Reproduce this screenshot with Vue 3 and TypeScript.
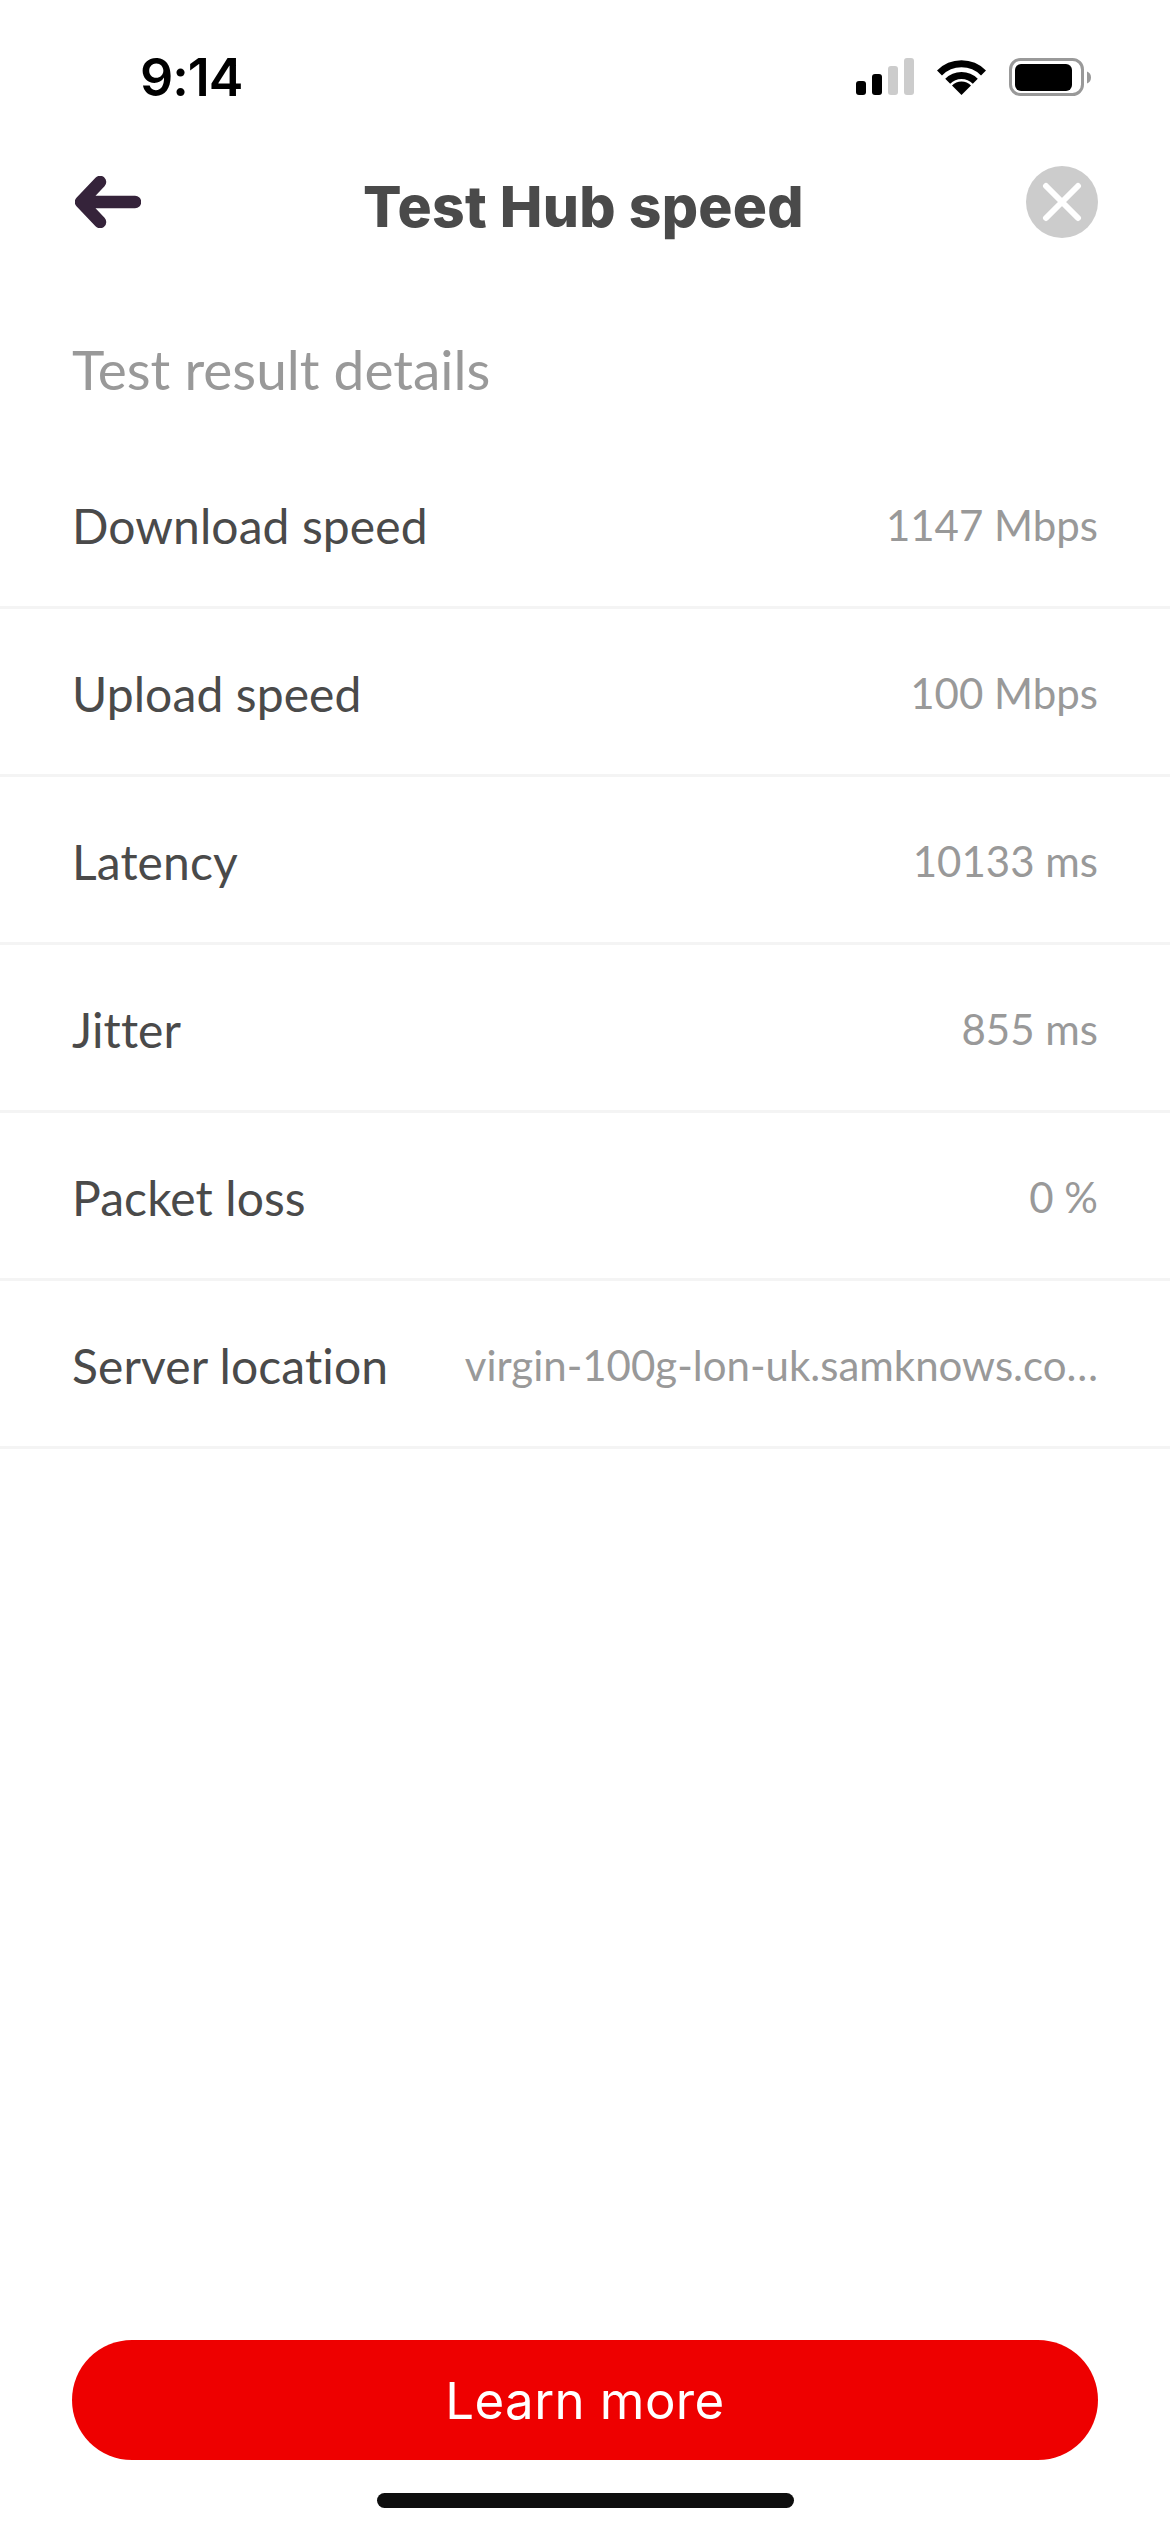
<script setup lang="ts">
interface Row {
  label: string;
  value: string;
}
const rows: Row[] = [
  { label: 'Download speed', value: '1147 Mbps' },
  { label: 'Upload speed', value: '100 Mbps' },
  { label: 'Latency', value: '10133 ms' },
  { label: 'Jitter', value: '855 ms' },
  { label: 'Packet loss', value: '0 %' },
  { label: 'Server location', value: 'virgin-100g-lon-uk.samknows.co…' },
];
</script>

<template>
  <div class="page">
    <div class="status">
      <span class="time">9:14</span>
      <div class="status-icons">
        <svg width="58" height="37" viewBox="0 0 58 37">
          <rect x="0" y="23" width="10" height="14" rx="3" fill="#000" />
          <rect x="16" y="16" width="10" height="21" rx="3" fill="#000" />
          <rect x="32" y="8" width="10" height="29" rx="3" fill="#ccc" />
          <rect x="48" y="0" width="10" height="37" rx="3" fill="#ccc" />
        </svg>
        <svg width="51" height="37" viewBox="0 0 51 37">
          <path d="M3.5 15 A31 31 0 0 1 47.5 15" fill="none" stroke="#000" stroke-width="7" />
          <path d="M11.7 23.2 A19.5 19.5 0 0 1 39.3 23.2" fill="none" stroke="#000" stroke-width="7" />
          <path d="M25.5 37 L16 27.5 A13.4 13.4 0 0 1 35 27.5 Z" fill="#000" />
        </svg>
        <svg width="82" height="38" viewBox="0 0 82 38">
          <rect x="1.5" y="1.5" width="72" height="35" rx="10" fill="none" stroke="#999" stroke-width="3" />
          <rect x="6" y="6" width="57" height="27" rx="6" fill="#000" />
          <path d="M78 13.5 A6.5 6.5 0 0 1 78 25.5 Z" fill="#999" />
        </svg>
      </div>
    </div>

    <header class="nav">
      <svg class="back" width="66" height="52" viewBox="0 0 66 52">
        <path d="M60 26 H8 M25 6 L6 26 L25 46" fill="none" stroke="#35233a" stroke-width="12.5" stroke-linecap="round" stroke-linejoin="round" />
      </svg>
      <h1 class="title">Test Hub speed</h1>
      <div class="close">
        <svg width="40" height="40" viewBox="0 0 40 40">
          <path d="M4 4 L36 36 M36 4 L4 36" stroke="#fff" stroke-width="6" stroke-linecap="round" />
        </svg>
      </div>
    </header>

    <h2 class="heading">Test result details</h2>

    <div class="rows">
      <div v-for="row in rows" :key="row.label" class="row">
        <span class="label">{{ row.label }}</span>
        <span class="value">{{ row.value }}</span>
      </div>
    </div>

    <div class="footer">
      <button class="cta" type="button">Learn more</button>
      <div class="home"></div>
    </div>
  </div>
</template>

<style scoped>
.page {
  width: 1170px;
  height: 2532px;
  background: #fff;
  display: flex;
  flex-direction: column;
  font-family: Lato, "Noto Sans", sans-serif;
  overflow: hidden;
}
.status {
  height: 166px;
  box-sizing: border-box;
  padding: 58px 79px 0 140px;
  display: flex;
  justify-content: space-between;
  align-items: flex-start;
}
.time {
  font-family: Inter, sans-serif;
  font-weight: 600;
  font-size: 52px;
  line-height: 40px;
  color: #000;
  letter-spacing: -1px;
}
.status-icons {
  display: flex;
  gap: 22px;
  align-items: flex-start;
}
.nav {
  height: 72px;
  padding: 0 72px 0 75px;
  display: flex;
  align-items: center;
  justify-content: space-between;
}
.back {
  flex: none;
}
.title {
  margin: 10px 0 0;
  font-family: Inter, sans-serif;
  font-weight: 800;
  font-size: 57px;
  letter-spacing: 0.3px;
  line-height: 66px;
  color: #4a4a4a;
}
.close {
  width: 72px;
  height: 72px;
  border-radius: 50%;
  background: #ccc;
  display: flex;
  align-items: center;
  justify-content: center;
}
.heading {
  margin: 98px 0 39px;
  padding: 0 72px;
  font-weight: 400;
  font-size: 55px;
  line-height: 66px;
  color: #999;
}
.row {
  height: 168px;
  box-sizing: border-box;
  border-bottom: 3px solid #f4f4f4;
  padding: 3px 72px 0;
  display: flex;
  align-items: center;
  justify-content: space-between;
}
.label {
  flex: none;
  font-size: 48px;
  letter-spacing: 0.1px;
  color: #4a4a4a;
}
.value {
  font-size: 42px;
  color: #999;
  white-space: nowrap;
}
.footer {
  margin-top: auto;
  padding: 0 72px 24px;
  display: flex;
  flex-direction: column;
  align-items: center;
}
.cta {
  width: 100%;
  height: 120px;
  border: none;
  border-radius: 60px;
  background: #ee0000;
  color: #fff;
  font-family: Inter, sans-serif;
  font-weight: 400;
  font-size: 51px;
  letter-spacing: 0.4px;
}
.home {
  width: 417px;
  height: 15px;
  margin-top: 33px;
  border-radius: 8px;
  background: #0e0e0e;
}
</style>
